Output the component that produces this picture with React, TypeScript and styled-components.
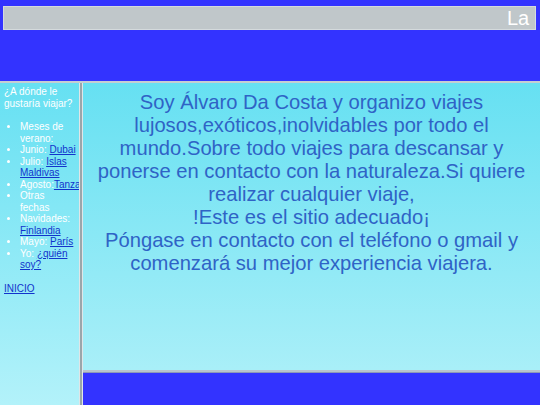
import React from 'react'
import styled, { createGlobalStyle } from 'styled-components'

const GlobalStyle = createGlobalStyle`
  html, body {
    margin: 0;
    padding: 0;
    height: 100%;
    overflow: hidden;
  }
  #root {
    height: 100%;
  }
`

const Page = styled.div`
  width: 540px;
  height: 405px;
  display: grid;
  grid-template-rows: 81px 2px 1fr;
  background: #3333ff;
  font-family: 'Liberation Sans', Arial, sans-serif;
`

const Header = styled.header`
  background: #3333ff;
  padding: 6px 4px 0 3px;
`

const MarqueeBox = styled.div`
  height: 24px;
  background: #c0c7ca;
  box-shadow: inset 0 0 0 1px #d4dadc;
  overflow: hidden;
  position: relative;
`

// scrolling text, caught at the moment the first letters enter the box
const MarqueeText = styled.span`
  position: absolute;
  left: 504px;
  top: 0;
  white-space: nowrap;
  color: #ffffff;
  font-size: 20px;
  line-height: 24px;
`

const HRule = styled.div`
  background: #c5ced2;
`

const Body = styled.div`
  display: grid;
  grid-template-columns: 79px 4px 1fr;
  min-height: 0;
`

const Sidebar = styled.nav`
  background: linear-gradient(#66e0f2, #b3f2fa);
  color: #ffffff;
  font-size: 10px;
  line-height: 11.5px;
  padding: 3px 3px 0 4px;
  overflow: hidden;
`

const Question = styled.p`
  margin: 0 0 12px;
`

const List = styled.ul`
  margin: 0 0 12px;
  padding: 0 0 0 16px;
  list-style: disc;
`

const Item = styled.li`
  margin: 0;
  white-space: normal;
`

const Link = styled.a`
  color: #1233cc;
  text-decoration: underline;
`

const Divider = styled.div`
  background: #c2cbcf;
  border-left: 1px solid #dfe6e8;
  border-right: 1px solid #dfe6e8;
  box-shadow: inset 1px 0 0 #9aa6ab, inset -1px 0 0 #9aa6ab;
  box-sizing: border-box;
`

const RightColumn = styled.div`
  display: grid;
  grid-template-rows: 1fr 3px 32px;
  min-height: 0;
`

const Content = styled.main`
  background: linear-gradient(#66e0f2, #a9eff8);
  padding: 8px 6px 0;
  text-align: center;
  color: #2f63c6;
  font-size: 20.2px;
  line-height: 23px;
  overflow: hidden;
`

const Paragraph = styled.p`
  margin: 0;
`

const FooterRule = styled.div`
  background: #b9c3cc;
  border-bottom: 1px solid #8e98b8;
`

const Footer = styled.footer`
  background: #3333ff;
`

const destinations: { label: string; link?: string }[] = [
  { label: 'Meses de verano:' },
  { label: 'Junio: ', link: 'Dubai' },
  { label: 'Julio: ', link: 'Islas Maldivas' },
  { label: 'Agosto:', link: 'Tanzania' },
  { label: 'Otras fechas' },
  { label: 'Navidades: ', link: 'Finlandia' },
  { label: 'Mayo: ', link: 'París' },
  { label: 'Yo: ', link: '¿quién soy?' },
]

export default function App() {
  return (
    <>
      <GlobalStyle />
      <Page>
        <Header>
          <MarqueeBox>
            <MarqueeText>La mejor agencia de viajes</MarqueeText>
          </MarqueeBox>
        </Header>
        <HRule />
        <Body>
          <Sidebar>
            <Question>¿A dónde le gustaría viajar?</Question>
            <List>
              {destinations.map(d => (
                <Item key={d.label + (d.link ?? '')}>
                  {d.label}
                  {d.link && <Link href="#">{d.link}</Link>}
                </Item>
              ))}
            </List>
            <Link href="#">INICIO</Link>
          </Sidebar>
          <Divider />
          <RightColumn>
            <Content>
              <Paragraph>
                Soy Álvaro Da Costa y organizo viajes lujosos,exóticos,inolvidables por todo el
                mundo.Sobre todo viajes para descansar y ponerse en contacto con la naturaleza.Si
                quiere realizar cualquier viaje,
              </Paragraph>
              <Paragraph>!Este es el sitio adecuado¡</Paragraph>
              <Paragraph>
                Póngase en contacto con el teléfono o gmail y comenzará su mejor experiencia
                viajera.
              </Paragraph>
            </Content>
            <FooterRule />
            <Footer />
          </RightColumn>
        </Body>
      </Page>
    </>
  )
}
